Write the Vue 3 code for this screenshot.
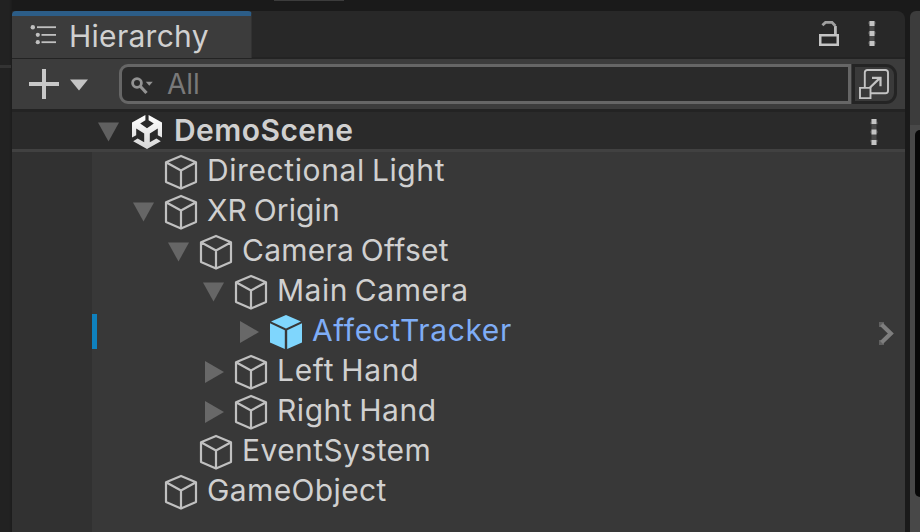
<script setup>
const rows = [
  { name: 'Directional Light', level: 0, arrow: '', tracking: 0.6 },
  { name: 'XR Origin', level: 0, arrow: 'down', tracking: 0.15 },
  { name: 'Camera Offset', level: 1, arrow: 'down', tracking: 0.25 },
  { name: 'Main Camera', level: 2, arrow: 'down', tracking: 0.5 },
  { name: 'AffectTracker', level: 3, arrow: 'right', prefab: true, tracking: 0.62 },
  { name: 'Left Hand', level: 2, arrow: 'right', tracking: 0.7 },
  { name: 'Right Hand', level: 2, arrow: 'right', tracking: 0.55 },
  { name: 'EventSystem', level: 1, arrow: '', tracking: 0.42 },
  { name: 'GameObject', level: 0, arrow: '', tracking: 0.38 }
]
</script>

<template>
  <div class="editor">
    <div class="left-edge"><i class="edge-line"></i></div>
    <main class="window">
      <div class="top-gap"><i class="top-handle"></i></div>
      <header class="tabs">
        <div class="tab">
          <svg class="list-icon" width="28" height="22" viewBox="0 0 28 22">
            <g fill="#c0c0c0">
              <circle cx="2.8" cy="3.2" r="2.2" /><circle cx="7.8" cy="10.8" r="2.1" /><circle cx="7.8" cy="18.2" r="2.1" />
              <rect x="7" y="2.3" width="19" height="1.8" /><rect x="11.5" y="10" width="14.5" height="1.8" /><rect x="11.5" y="17.3" width="14.5" height="1.8" />
            </g>
          </svg>
          <span class="tab-title">Hierarchy</span>
        </div>
        <svg class="lock" width="20" height="26" viewBox="0 0 20 26">
          <path d="M1.25 14.25H18.75V23.75H1.25Z" fill="none" stroke="#c4c4c4" stroke-width="2.5" />
          <path d="M16.4 13V5" fill="none" stroke="#bababa" stroke-width="2.8" />
          <path d="M3.4 4.2L6.5 1.4H13L16.4 5" fill="none" stroke="#a0a0a0" stroke-width="2.8" />
        </svg>
        <svg class="kebab" width="8" height="28" viewBox="0 0 8 28">
          <path d="M0 3h8M0 13h8M0 23h8" stroke="#444" stroke-width="2.6" />
          <path d="M4 1v25" stroke="#4a4a4a" stroke-width="5" />
          <path d="M1.5 1h5v5h-5zM1.5 11h5v5h-5zM1.5 21h5v5h-5z" fill="#c4c4c4" />
        </svg>
      </header>
      <div class="toolbar">
        <svg class="plus" width="30" height="30" viewBox="0 0 30 30"><path d="M15 0v30M0 15h30" stroke="#c8c8c8" stroke-width="4" /></svg>
        <svg class="drop" width="18" height="12" viewBox="0 0 18 12"><path d="M0 .5h18L9 11.5z" fill="#c4c4c4" /></svg>
        <div class="search">
          <svg class="mag" width="22" height="18" viewBox="0 0 22 18">
            <circle cx="6" cy="6" r="4.4" fill="none" stroke="#939393" stroke-width="2.8" />
            <path d="M9 9l6.5 7" stroke="#939393" stroke-width="3.2" />
            <path d="M14.8 4.8h7l-3.5 4z" fill="#939393" />
          </svg>
          <span class="placeholder">All</span>
        </div>
        <div class="picker">
          <svg width="30" height="30" viewBox="0 0 30 30" fill="none" stroke="#c4c4c4">
            <path d="M5.8 18V3.5a2.5 2.5 0 0 1 2.5-2.5H26.5A2.5 2.5 0 0 1 29 3.5V21.7a2.5 2.5 0 0 1-2.5 2.5H12" stroke-width="1.9" />
            <path d="M1 18.9h10.5v10.2H1z" stroke-width="1.9" />
            <path d="M10.8 18.8L21.3 8.6M13 8.8h8.5v8.5" stroke-width="2.2" />
          </svg>
        </div>
      </div>
      <div class="scene">
        <svg class="scene-arrow" width="21" height="20" viewBox="0 0 21 20"><path d="M0 .5h21L10.5 19.5z" fill="#606060" /></svg>
        <svg class="unity" width="30" height="34" viewBox="0 0 30 34">
          <defs><linearGradient id="logo-shade" x1="0" y1="0" x2="0" y2="1"><stop offset="0" stop-color="#fff" /><stop offset="1" stop-color="#d6d6d6" /></linearGradient></defs>
          <path d="M13.4 0V5.2L8.2 8.6 15 13.2 21.8 8.6 16.6 5.2V0L30 7.6V22.6L25.8 20.2V13.6L17.8 18.4V27.2L24.4 23.4 28.8 26.2 15 34 1.2 26.2 5.6 23.4 12.2 27.2V18.4L4.2 13.6V20.2L0 22.6V7.6Z" fill="url(#logo-shade)" />
        </svg>
        <span class="scene-name">DemoScene</span>
        <svg class="kebab scene-kebab" width="8" height="28" viewBox="0 0 8 28">
          <path d="M0 5h8M0 14h8M0 23h8" stroke="#444" stroke-width="2.6" />
          <path d="M4 1v26" stroke="#4a4a4a" stroke-width="5" />
          <path d="M1.5 1h5v5h-5zM1.5 11.5h5v5h-5zM1.5 22h5v5h-5z" fill="#c4c4c4" />
        </svg>
      </div>
      <div class="tree">
        <div class="gutter"></div>
        <div class="rows">
          <div v-for="r in rows" :key="r.name" class="row" :class="['level-' + r.level, { prefab: r.prefab }]">
            <i v-if="r.prefab" class="marker"></i>
            <span class="arrow">
              <svg v-if="r.arrow === 'down'" width="21" height="20" viewBox="0 0 21 20"><path d="M0 .5h21L10.5 19.5z" fill="#666" /></svg>
              <svg v-else-if="r.arrow" class="closed" width="19" height="22" viewBox="0 0 19 22"><path d="M0 0v22L19 11z" fill="#686868" /></svg>
            </span>
            <svg class="cube" width="34" height="36" viewBox="0 0 34 36">
              <template v-if="r.prefab">
                <path d="M17 1L32 7.5 17 14.5 2 7.5z" fill="#7fd6fd" />
                <path d="M1 9.3l14.8 7V35L1 28.5zM33 9.3l-14.8 7V35L33 28.5z" fill="#7fd6fd" />
              </template>
              <path v-else d="M17 1.9L32 8.2V28L17 34.6 2 28V8.2zM2 8.2l15 8.3 15-8.3M17 16.5v18" fill="none" stroke="#c0c0c0" stroke-width="2.2" stroke-linejoin="round" />
            </svg>
            <span class="label" :style="{ letterSpacing: r.tracking + 'px' }">{{ r.name }}</span>
            <svg v-if="r.prefab" class="chevron" width="15" height="23" viewBox="0 0 15 23">
              <path d="M0 0h5v5H0zM0 18h5v5H0z" fill="#606060" />
              <path d="M2.5 2.5L11.8 11.5 2.5 20.5" fill="none" stroke="#7e7e7e" stroke-width="4.2" />
            </svg>
          </div>
        </div>
      </div>
    </main>
    <div class="divider"></div>
    <aside class="side"><div class="side-head"></div><div class="side-body"><div class="view"></div></div></aside>
  </div>
</template>

<style>
body { background: #1a1a1a; overflow: hidden; }
</style>

<style scoped>
* { box-sizing: border-box; }
svg { display: block; flex: none; }
.editor { display: flex; width: 920px; height: 532px; overflow: hidden; background: #1a1a1a; font-family: Inter, sans-serif; font-size: 30px; color: #d0d0d0; white-space: nowrap; }
.left-edge { width: 12px; padding-top: 65px; background: linear-gradient(90deg, #222 9px, #1c1c1c 12px); }
.edge-line { display: block; width: 11px; height: 3px; background: #333; }
.window { width: 893px; display: flex; flex-direction: column; }
.top-gap { height: 11px; flex: none; background: #1a1a1a; }
.top-handle { display: block; width: 70px; height: 1px; margin-left: 262px; background: #3c3c3c; }
.tabs { height: 48px; flex: none; display: flex; align-items: flex-start; background: #282828; border-bottom: 2px solid #232323; border-radius: 0 8px 0 0; }
.tab { width: 240px; height: 47px; display: flex; padding-left: 18px; background: #3c3c3c; border-top: 5px solid #2c5d87; border-right: 1px solid #323232; border-radius: 4px 4px 0 0; }
.list-icon { margin-top: 8px; }
.tab-title { margin-left: 11px; line-height: 40px; letter-spacing: 0.28px; }
.lock { margin: 10px 0 0 567px; }
.kebab { margin: 9px 0 0 29px; }
.toolbar { height: 50px; flex: none; display: flex; background: #3c3c3c; }
.plus { margin: 10px 0 0 17px; }
.drop { margin: 20px 0 0 11px; }
.search { width: 732px; height: 40px; margin: 5px 0 0 31px; display: flex; background: #2a2a2a; border: 3px solid #666; border-radius: 9px 0 0 9px; }
.mag { margin: 10px 0 0 9px; }
.placeholder { margin-left: 14px; line-height: 35px; font-size: 28px; color: #797979; }
.picker { width: 45px; height: 40px; margin: 5px 0 0 1px; padding: 2px 0 0 4px; border: 3px solid #242424; border-radius: 0 11px 11px 0; background: #3a3a3a; }
.scene { height: 43px; flex: none; display: flex; background: #2a2a2a; border-top: 3px solid #232323; border-bottom: 3px solid #414141; }
.scene-arrow { margin: 10px 0 0 86px; }
.unity { margin: 3px 0 0 13px; }
.scene-name { width: 200px; margin-left: 12px; line-height: 37px; font-weight: 600; letter-spacing: 0.45px; }
.scene-kebab { margin: 6px 0 0 496px; }
.tree { flex: 1; min-height: 0; display: flex; background: #383838; }
.gutter { width: 80px; background: #313131; }
.rows { flex: 1; }
.row { position: relative; height: 40px; display: flex; padding-left: 41px; }
.level-1 { padding-left: 76px; }
.level-2 { padding-left: 111px; }
.level-3 { padding-left: 146px; }
.marker { position: absolute; left: 0; top: 2px; width: 5px; height: 35px; background: #0f81be; }
.arrow { width: 31px; flex: none; padding-top: 10px; }
.closed { margin: -1px 0 0 2px; }
.cube { margin-top: 2px; }
.label { margin-left: 9px; line-height: 36px; word-spacing: -2px; }
.prefab .label { color: #7fadf6; }
.chevron { margin: 10px 11px 0 auto; }
.divider { width: 5px; background: #1a1a1a; }
.side { flex: 1; padding-top: 11px; display: flex; flex-direction: column; }
.side-head { height: 114px; background: #3c3c3c; border-radius: 6px 0 0 0; }
.side-body { flex: 1; padding: 5px 0 0 5px; background: #484848; }
.view { height: 367px; background: #080808; border-radius: 7px 0 0 7px; }
</style>
